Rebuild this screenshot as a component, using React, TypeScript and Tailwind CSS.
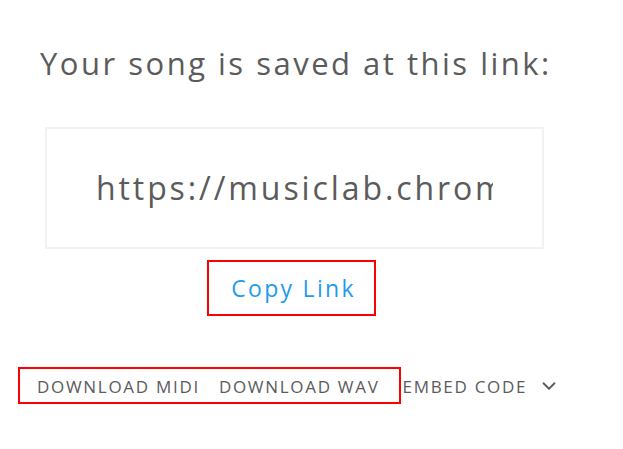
import { ChevronDown } from "lucide-react";

const font = { fontFamily: '"Open Sans", "Liberation Sans", sans-serif' };

function ShareLink({ url }: { url: string }) {
  return (
    <div className="flex flex-col">
      <div className="ml-[45px] w-[499px] h-[122px] border-2 border-[#f2f2f2] flex items-center px-[49px] overflow-hidden">
        <input
          readOnly
          value={url}
          className="w-full bg-transparent outline-none text-[32px] tracking-[2.9px] text-[#5b5b5b]"
          style={font}
        />
      </div>
      <button className="ml-[207px] mt-[11px] w-[169px] h-[56px] border-2 border-[#ff0000] flex items-center justify-center pl-[4px] text-[23px] tracking-[2.3px] text-[#1e9bf0]">
        Copy Link
      </button>
    </div>
  );
}

export default function App() {
  return (
    <div className="w-[623px] h-[449px] bg-white overflow-hidden" style={font}>
      <h1 className="pl-[40px] pt-[41px] text-[31px] leading-[44px] tracking-[2.5px] text-[#5b5b5b] font-normal">
        Your song is saved at this link:
      </h1>
      <div className="mt-[42px]">
        <ShareLink url="https://musiclab.chromeexperiments.com/Song-Maker/song/5361889219624960" />
      </div>
      <div className="mt-[51px] flex items-center text-[17px] tracking-[1.7px] text-[#5b5b5b] uppercase">
        <div className="ml-[18px] h-[37px] border-2 border-[#ff0000] flex items-center pt-[2px] pl-[17px] pr-[19px] gap-[19px]">
          <span>Download Midi</span>
          <span>Download Wav</span>
        </div>
        <span className="ml-[2px] pt-[2px]">Embed Code</span>
        <ChevronDown className="ml-[11px] w-[22px] h-[22px] text-[#5b5b5b]" strokeWidth={2} />
      </div>
    </div>
  );
}
